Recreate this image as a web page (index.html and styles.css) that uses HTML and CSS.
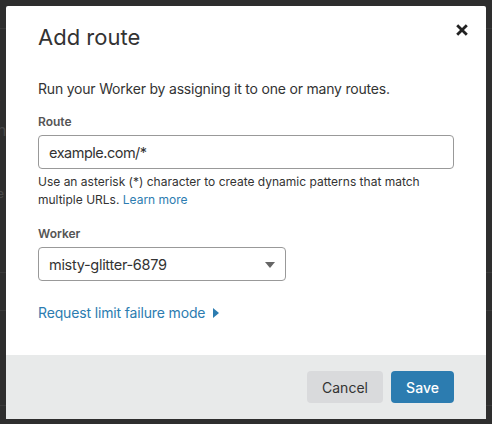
FILE: index.html
```html
<!DOCTYPE html>
<html lang="en">
<head>
<meta charset="utf-8">
<title>Add route</title>
<link rel="stylesheet" href="styles.css">
</head>
<body>
<div class="backdrop">
  <div class="bg-line l1"></div>
  <div class="bg-text t1">i</div>
  <div class="bg-text t2">n</div>
  <div class="bg-text t3">e</div>
  <div class="bg-line l2"></div>
  <div class="bg-line l3"></div>
  <div class="bg-line l4"></div>
</div>
<div class="modal" role="dialog" aria-labelledby="title">
  <div class="modal-body">
    <div class="modal-head">
      <h2 id="title" class="title">Add route</h2>
      <button class="close" aria-label="Close">
        <svg width="12" height="12" viewBox="0 0 12 12"><path d="M1.2 1.2L10.8 10.8M10.8 1.2L1.2 10.8" stroke="#222" stroke-width="2.8" stroke-linecap="butt"/></svg>
      </button>
    </div>
    <p class="desc">Run your Worker by assigning it to one or many routes.</p>
    <div class="field">
      <label class="label">Route</label>
      <div class="input">example.com/*</div>
      <p class="help">Use an asterisk (*) character to create dynamic patterns that match multiple URLs. <a class="link">Learn more</a></p>
    </div>
    <div class="field">
      <label class="label">Worker</label>
      <div class="select">
        <span>misty-glitter-6879</span>
        <svg class="caret" width="10" height="6" viewBox="0 0 10 6"><path d="M0 0H10L5 6Z" fill="#666"/></svg>
      </div>
    </div>
    <a class="toggle">Request limit failure mode
      <svg width="6" height="10" viewBox="0 0 6 10"><path d="M0 0L6 5L0 10Z" fill="#2c7cb0"/></svg>
    </a>
  </div>
  <div class="modal-foot">
    <button class="btn btn-cancel">Cancel</button>
    <button class="btn btn-save">Save</button>
  </div>
</div>
</body>
</html>
```

FILE: styles.css
```css
* { box-sizing: border-box; }
html, body { margin: 0; padding: 0; }
body {
  width: 492px;
  height: 424px;
  overflow: hidden;
  background: #2e2e2e;
  font-family: Inter, "Noto Sans", sans-serif;
  color: #333;
  position: relative;
  padding: 6px 6px 0 6px;
}
.backdrop {
  position: absolute;
  inset: 0;
  z-index: 0;
}
.bg-line { position: absolute; left: 0; right: 0; height: 1px; background: #3a3a3a; }
.l1 { top: 28px; }
.l2 { top: 272px; }
.l3 { top: 310px; }
.l4 { top: 405px; }
.bg-text { position: absolute; left: -3px; color: #4a4a4a; font-size: 16px; }
.t1 { top: 96px; }
.t2 { top: 120px; }
.t3 { top: 186px; font-size: 12px; }

.modal {
  position: relative;
  z-index: 1;
  width: 480px;
  height: 413px;
  background: #fff;
  border-radius: 2px 2px 0 0;
  display: flex;
  flex-direction: column;
  overflow: hidden;
}
.modal-body {
  flex: 1;
  padding: 17px 32px 0 32px;
}
.modal-head {
  display: flex;
  justify-content: space-between;
  align-items: flex-start;
}
.title {
  margin: 0;
  font-size: 22px;
  font-weight: 400;
  color: #333;
  line-height: 28px;
}
.close {
  border: 0;
  background: none;
  padding: 0;
  margin: 1px -14px 0 0;
  width: 12px;
  height: 12px;
  display: flex;
  align-items: center;
  justify-content: center;
}
.desc {
  margin: 28px 0 0 0;
  font-size: 14px;
  line-height: 20px;
  letter-spacing: -0.2px;
  color: #333;
}
.field { margin-top: 15px; }
.field + .field { margin-top: 17px; }
.label {
  display: block;
  font-size: 12px;
  font-weight: 600;
  color: #555;
  line-height: 16px;
  margin-bottom: 5px;
}
.input, .select {
  height: 34px;
  border: 1px solid #999;
  border-radius: 4px;
  font-size: 14.5px;
  color: #333;
  display: flex;
  align-items: center;
  padding: 0 10px;
}
.input { width: 416px; letter-spacing: -0.5px; }
.select {
  width: 248px;
  justify-content: space-between;
  padding-right: 10px;
  letter-spacing: -0.3px;
}
.caret { margin-top: 1px; }
.help {
  margin: 4px 0 0 0;
  font-size: 12px;
  line-height: 18px;
  color: #333;
}
.link { color: #2c7cb0; }
.toggle {
  display: inline-flex;
  align-items: center;
  gap: 8px;
  margin-top: 22px;
  font-size: 14px;
  letter-spacing: -0.15px;
  color: #2c7cb0;
  line-height: 20px;
}
.modal-foot {
  height: 64px;
  background: #e8eaea;
  display: flex;
  justify-content: flex-end;
  align-items: center;
  gap: 8px;
  padding: 0 32px 0 0;
}
.btn {
  height: 32px;
  border: 0;
  border-radius: 4px;
  font-family: inherit;
  font-size: 14px;
  padding: 0;
}
.btn-cancel { width: 76px; background: #d9dadc; color: #333; }
.btn-save { width: 63px; background: #2c7cb0; color: #fff; font-weight: 500; }
```
